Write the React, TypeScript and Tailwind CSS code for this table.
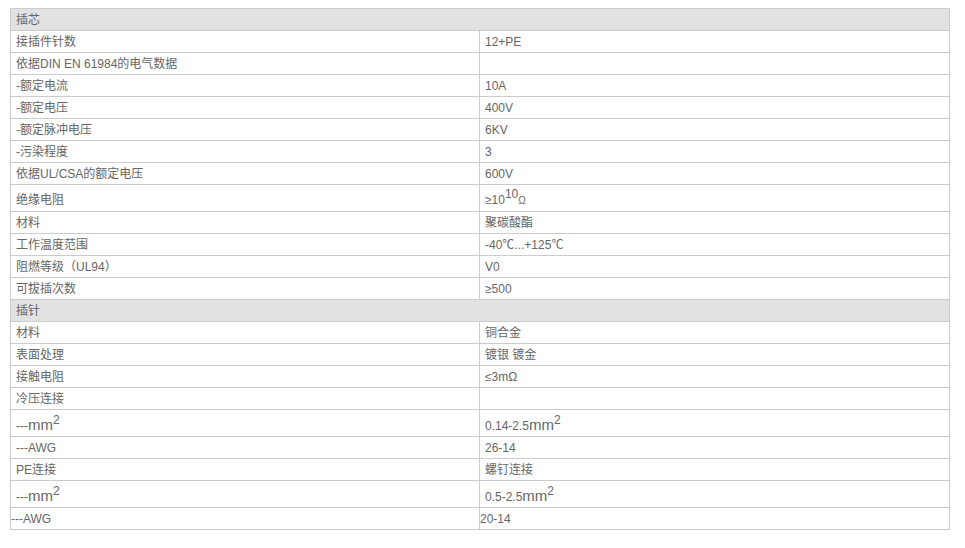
import React from "react";

type Row =
  | { kind: "header"; label: string }
  | { kind: "row"; left: React.ReactNode; right: React.ReactNode; tall?: boolean; flush?: boolean };

const Mm = () => (
  <span>
    <span className="text-[15px]">mm</span>
    <sup className="text-[12px]">2</sup>
  </span>
);

const rows: Row[] = [
  { kind: "header", label: "插芯" },
  { kind: "row", left: "接插件针数", right: "12+PE" },
  { kind: "row", left: "依据DIN EN 61984的电气数据", right: "" },
  { kind: "row", left: "-额定电流", right: "10A" },
  { kind: "row", left: "-额定电压", right: "400V" },
  { kind: "row", left: "-额定脉冲电压", right: "6KV" },
  { kind: "row", left: "-污染程度", right: "3" },
  { kind: "row", left: "依据UL/CSA的额定电压", right: "600V" },
  {
    kind: "row",
    left: "绝缘电阻",
    right: (
      <span>
        ≥10<sup className="text-[12px]">10</sup>
        <span className="text-[10px]">Ω</span>
      </span>
    ),
    tall: true,
  },
  { kind: "row", left: "材料", right: "聚碳酸酯" },
  { kind: "row", left: "工作温度范围", right: "-40℃...+125℃" },
  { kind: "row", left: "阻燃等级（UL94）", right: "V0" },
  { kind: "row", left: "可拔插次数", right: "≥500" },
  { kind: "header", label: "插针" },
  { kind: "row", left: "材料", right: "铜合金" },
  { kind: "row", left: "表面处理", right: "镀银 镀金" },
  { kind: "row", left: "接触电阻", right: "≤3mΩ" },
  { kind: "row", left: "冷压连接", right: "" },
  {
    kind: "row",
    left: (
      <span>
        ---
        <Mm />
      </span>
    ),
    right: (
      <span>
        0.14-2.5
        <Mm />
      </span>
    ),
    tall: true,
  },
  { kind: "row", left: "---AWG", right: "26-14" },
  { kind: "row", left: "PE连接", right: "螺钉连接" },
  {
    kind: "row",
    left: (
      <span>
        ---
        <Mm />
      </span>
    ),
    right: (
      <span>
        0.5-2.5
        <Mm />
      </span>
    ),
    tall: true,
  },
  { kind: "row", left: "---AWG", right: "20-14", flush: true },
];

export default function App() {
  return (
    <div
      className="w-[965px] h-[548px] bg-white pt-2 pl-[10px] text-[12px] text-[#666]"
      style={{ fontFamily: '"Liberation Sans", Arial, "Noto Sans CJK SC", sans-serif' }}
    >
      <div className="w-[940px] border-t border-l border-r border-[#cccccc]">
        {rows.map((r, i) =>
          r.kind === "header" ? (
            <div
              key={i}
              className="h-[22px] flex items-center bg-[#e2e2e2] border-b border-[#cccccc] pl-[5px]"
            >
              {r.label}
            </div>
          ) : (
            <div
              key={i}
              className={
                "flex border-b border-[#cccccc] " + (r.tall ? "h-[27px]" : "h-[22px]")
              }
            >
              <div
                className={
                  "w-[469px] border-r border-[#cccccc] flex items-center leading-none " +
                  (r.flush ? "pl-0" : "pl-[5px]") +
                  (r.tall ? " pt-[3px]" : "")
                }
              >
                {r.left}
              </div>
              <div
                className={
                  "flex-1 flex items-center leading-none " +
                  (r.flush ? "pl-0" : "pl-[5px]") +
                  (r.tall ? " pt-[3px]" : "")
                }
              >
                {r.right}
              </div>
            </div>
          )
        )}
      </div>
    </div>
  );
}
